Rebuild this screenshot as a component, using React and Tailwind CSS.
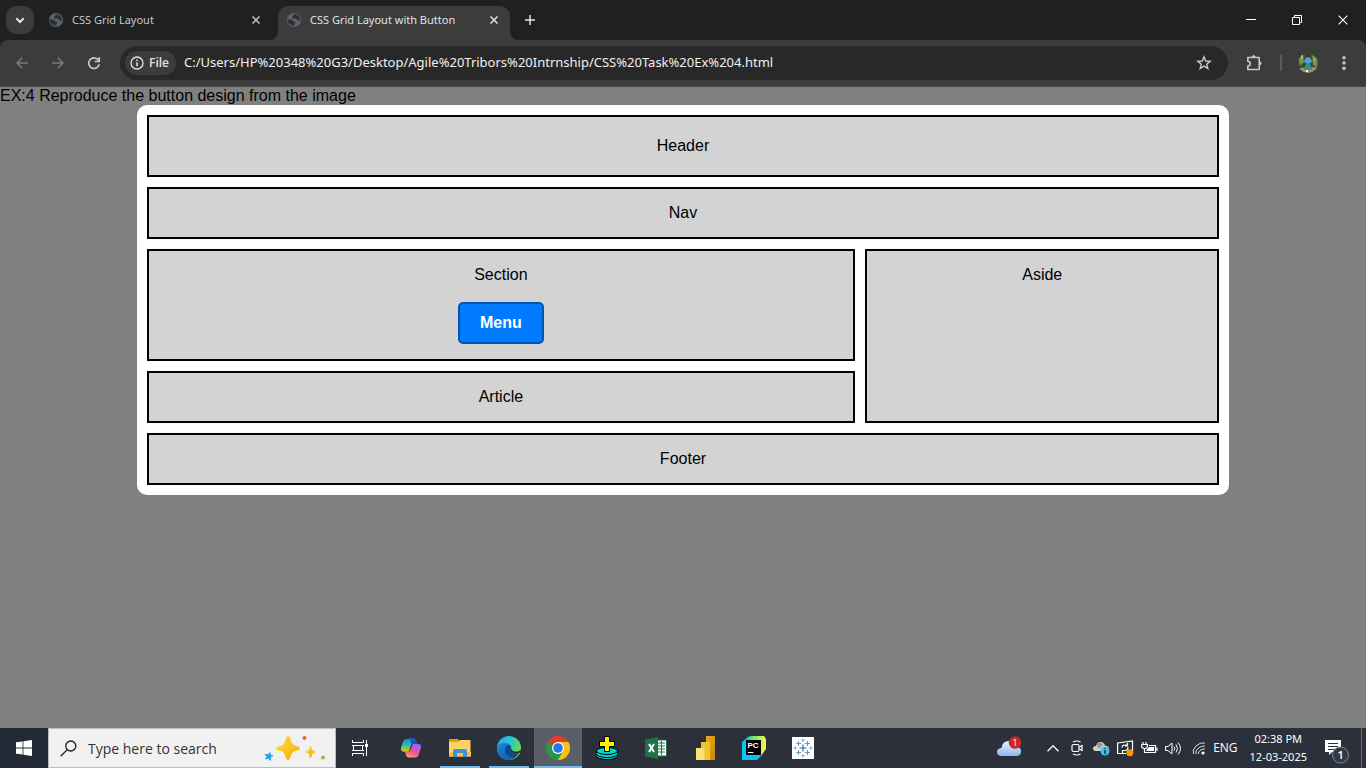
import React from "react";

const UI = "font-['Open_Sans','Noto_Sans',sans-serif]";

function Globe() {
  return (
    <svg width="16" height="16" viewBox="0 0 16 16" className="shrink-0" aria-hidden="true">
      <circle cx="8" cy="8" r="7" fill="#5f6368" />
      <path d="M1.600 7.500H4.600Q7.300 7.600 7.300 9.600H8.600Q9.600 9.800 9.600 11L8.400 11.400V13.800Q5 14 3 11.800Q1.600 10 1.600 7.500Z" fill="#2d3033" />
      <path d="M7.400 2.200H9.800Q12.600 3.200 13.800 5.800L13.900 8.400Q12 9.300 11.400 7.900L9.600 6.600H7.600Q5.800 6.400 6 4.900Q6.200 4 7.400 4Z" fill="#2d3033" />
    </svg>
  );
}

function Cross({ size = 8, stroke = 1.5 }) {
  return (
    <svg width={size} height={size} viewBox="0 0 8 8" fill="none" stroke="currentColor" strokeWidth={stroke} aria-hidden="true">
      <path d="M.5 .5 7.5 7.5M7.5 .5 .5 7.5" />
    </svg>
  );
}

function TabBar() {
  return (
    <div className="flex h-10 items-center bg-[#1f2120] text-[#e3e3e3]">
      <button aria-label="Search tabs" className="ml-1.5 flex size-7 items-center justify-center rounded-[10px] bg-[#3c3c3c]">
        <svg width="10" height="7" viewBox="0 0 10 7" fill="none" stroke="currentColor" strokeWidth="2"><path d="M1.3 1.3 5 5 8.700 1.3" /></svg>
      </button>
      <div className="ml-3.5 flex w-[230px] items-center gap-2 pr-[18px] text-[#c7c7c7]">
        <Globe />
        <span className="flex-1 font-['Noto_Sans',sans-serif] text-[11px] leading-4">CSS Grid Layout</span>
        <button aria-label="Close CSS Grid Layout" className="flex"><Cross /></button>
      </div>
      <div className="relative flex h-[34px] w-[232px] items-center gap-2 self-end rounded-t-[10px] bg-[#3c3c3c] pr-3 pb-1.5 pl-2">
        <svg className="absolute -left-2 bottom-0" width="8" height="8" viewBox="0 0 8 8"><path d="M8 0V8H0A8 8 0 0 0 8 0Z" fill="#3c3c3c" /></svg>
        <svg className="absolute -right-2 bottom-0" width="8" height="8" viewBox="0 0 8 8"><path d="M0 0V8H8A8 8 0 0 1 0 0Z" fill="#3c3c3c" /></svg>
        <Globe />
        <span className="flex-1 font-['Noto_Sans',sans-serif] text-[11px] leading-4 whitespace-nowrap">CSS Grid Layout with Button</span>
        <button aria-label="Close CSS Grid Layout with Button" className="flex"><Cross /></button>
      </div>
      <button aria-label="New tab" className="ml-1.5 flex size-7 items-center justify-center">
        <svg width="12" height="12" viewBox="0 0 12 12" stroke="currentColor" strokeWidth="1.500"><path d="M6 1V11M1 6H11" /></svg>
      </button>
      <div className="ml-auto flex h-full text-white">
        <button aria-label="Minimize" className="flex w-[46px] items-center justify-center">
          <svg width="10" height="10" viewBox="0 0 10 10"><path d="M0 4H10V5H0Z" fill="currentColor" /></svg>
        </button>
        <button aria-label="Restore" className="flex w-[46px] items-center justify-center">
          <svg width="10" height="10" viewBox="0 0 10 10" fill="none" stroke="currentColor"><path d="M.5 2.500H7.500V9.500H.5ZM2.500 2.500V.5H9.500V7.500H7.500" /></svg>
        </button>
        <button aria-label="Close window" className="flex w-[46px] items-center justify-center">
          <Cross size={10} stroke={0.9} />
        </button>
      </div>
    </div>
  );
}

function Toolbar() {
  return (
    <div className="bg-[#1f2120]">
      <div className="flex h-[47px] items-center rounded-t-lg border-b border-[#4a4a4a] bg-[#3c3c3c] pr-2 pl-2 text-[#c7c7c7]">
        <div className="flex gap-2">
          <button aria-label="Back" className="flex size-7 items-center justify-center text-[#7b7b7b]">
            <svg width="12" height="12" viewBox="0 0 12 12" fill="none" stroke="currentColor" strokeWidth="1.500"><path d="M12 6H1.200M6.300 .8 1.100 6 6.300 11.200" /></svg>
          </button>
          <button aria-label="Forward" className="flex size-7 items-center justify-center text-[#7b7b7b]">
            <svg width="12" height="12" viewBox="0 0 12 12" fill="none" stroke="currentColor" strokeWidth="1.500"><path d="M0 6H10.800M5.700 .8 10.900 6 5.700 11.200" /></svg>
          </button>
          <button aria-label="Reload" className="flex size-7 items-center justify-center">
            <svg width="14" height="14" viewBox="0 0 14 14" fill="none" stroke="currentColor" strokeWidth="1.700"><path d="M12.200 8.300A5.300 5.300 0 1 1 11.300 4L12.300 5.200M12.200 1V5.500H7.700" /></svg>
          </button>
        </div>
        <div className="ml-3 flex h-[34px] flex-1 items-center rounded-full bg-[#282828] pr-4 pl-[5px]">
          <button className="flex h-6 items-center gap-[5px] rounded-full bg-[#3c3c3c] pr-[7px] pl-[5px] text-[12px] font-semibold text-[#e3e3e3]">
            <svg width="14" height="14" viewBox="0 0 14 14" fill="none" stroke="currentColor" strokeWidth="1.300"><circle cx="7" cy="7" r="6" /><path d="M7 6.200V10.300M7 3.500V5" strokeWidth="1.500" /></svg>
            File
          </button>
          <input
            aria-label="Address"
            className="ml-2 min-w-0 flex-1 bg-transparent font-['Noto_Sans',sans-serif] text-[13px] text-[#f0f0f0] outline-none"
            defaultValue="C:/Users/HP%20348%20G3/Desktop/Agile%20Tribors%20Intrnship/CSS%20Task%20Ex%204.html"
          />
          <button aria-label="Bookmark this page">
            <svg width="16" height="16" viewBox="0 0 16 16" fill="none" stroke="currentColor" strokeWidth="1.400"><path d="M8 1.800 9.700 6 14.200 6.300 10.700 9.200 11.800 13.600 8 11.200 4.200 13.600 5.300 9.200 1.800 6.300 6.300 6Z" /></svg>
          </button>
        </div>
        <button aria-label="Extensions" className="ml-[17px]">
          <svg width="18" height="18" viewBox="0 0 18 18" fill="none" stroke="currentColor" strokeWidth="1.600"><path d="M2.800 3.500H14.200V15.500H2.800V12A2.300 2.300 0 0 0 2.800 7.200Z" strokeLinejoin="round" /><path d="M7 3.500A1.700 1.900 0 0 1 10.400 3.500M14.200 7.600A1.900 1.800 0 0 1 14.200 11.200" fill="currentColor" strokeWidth="1" /></svg>
        </button>
        <span className="ml-[17px] h-4 w-0.5 bg-[#5a5a5a]" />
        <button aria-label="Profile" className="ml-4">
          <svg width="20" height="20" viewBox="0 0 20 20">
            <defs><clipPath id="avatar"><circle cx="10" cy="10" r="10" /></clipPath></defs>
            <g clipPath="url(#avatar)">
              <path d="M0 0H20V20H0Z" fill="#31502b" />
              <path d="M0 4 5 1 6 9 2 13ZM14 2 20 6 19 14 15 12Z" fill="#77904b" />
              <path d="M3 2h2v4H3ZM16 5h1v4h-1Z" fill="#a9b97d" />
              <path d="M0 15 20 14V20H0Z" fill="#a68b7d" />
              <path d="M8 4.500H12L14.500 9 12 9.500 12 11H8L7.500 9.500 5.500 9Z" fill="#4aa2e4" />
              <path d="M8 10H12L14 17H6Z" fill="#3b8c87" />
              <circle cx="10" cy="3" r="1.500" fill="#3b2824" />
              <path d="M9.300 4H10.700V6H9.300Z" fill="#b07a63" />
              <path d="M8 17h2v2H8Z" fill="#fff" />
            </g>
          </svg>
        </button>
        <button aria-label="Menu for the browser" className="ml-3 flex size-7 items-center justify-center">
          <svg width="4" height="14" viewBox="0 0 4 14" fill="currentColor"><circle cx="2" cy="1.800" r="1.700" /><circle cx="2" cy="7" r="1.700" /><circle cx="2" cy="12.200" r="1.700" /></svg>
        </button>
      </div>
    </div>
  );
}

function Page() {
  const box = "border-2 border-black bg-[#d3d3d3] p-[15px]";
  return (
    <main className="flex-1 bg-[#808080] font-['Liberation_Sans',sans-serif] text-[16px] leading-[18px] text-black">
      <p>EX:4 Reproduce the button design from the image</p>
      <div className="mx-auto grid w-4/5 grid-cols-[2fr_1fr] gap-2.5 rounded-[10px] bg-white p-2.5 text-center">
        <header className="col-span-2 border-2 border-black bg-[#d3d3d3] p-5">Header</header>
        <nav className={`col-span-2 ${box}`}>Nav</nav>
        <section className={box}>
          <p>Section</p>
          <button className="mx-auto mt-[18px] block rounded-[5px] border-2 border-[#0056b3] bg-[#007bff] px-5 py-2.5 font-bold text-white">Menu</button>
        </section>
        <aside className={`row-span-2 ${box}`}>Aside</aside>
        <article className={box}>Article</article>
        <footer className={`col-span-2 ${box}`}>Footer</footer>
      </div>
    </main>
  );
}

function TaskButton({ label, running, active, children }) {
  return (
    <button
      aria-label={label}
      className={`flex w-12 flex-col items-center ${active ? "bg-[#5a5f66]" : ""}`}
    >
      <span className="flex flex-1 items-center pt-0.5">{children}</span>
      <span className={`h-0.5 ${active ? "w-12 bg-[#76b9ed]" : running ? "w-10 bg-[#76b9ed]" : "w-10"}`} />
    </button>
  );
}

function Sparkles() {
  return (
    <svg width="64" height="28" viewBox="0 0 64 28" className="shrink-0" aria-hidden="true">
      <defs>
        <linearGradient id="star" x1="0" y1="0" x2="1" y2="1"><stop offset="0" stopColor="#ffdf45" /><stop offset="1" stopColor="#f4a900" /></linearGradient>
      </defs>
      <path d="M25 2Q27 2 28 7 29 11 33 12 37 13 37 14.500 37 16 32 17 29 18 28 21 27 26 25 26 23 26 22 21 21 18 18 17 13 16 13 14 13 13 18 12 21 11 22 7 23 2 25 2Z" fill="url(#star)" />
      <path d="M47.500 12Q48.500 12 49 15 49.500 16.500 52 17.500 53 18 52 18.600 49.500 19 49 21 48.500 24 47.500 24 46.500 24 46 21 45.500 19 43 18.600 41.500 18 43 17.500 45.500 16.500 46 15 46.500 12 47.500 12Z" fill="url(#star)" />
      <path d="M7 18.500 7 21.200 10 21.500 7.500 23.200 7.500 26.500 5.500 24 2.500 25 4 22.500 2 20.500 5 20.800Z" fill="#20a7e8" stroke="#20a7e8" strokeLinejoin="round" />
      <circle cx="41.500" cy="4" r="2" fill="#ed6230" />
      <circle cx="60" cy="23.500" r="2" fill="#87c540" />
    </svg>
  );
}

function Taskbar() {
  return (
    <footer className={`flex h-10 bg-[#2b303a] text-white ${UI}`}>
      <button aria-label="Start" className="flex w-12 items-center justify-center bg-[#232a36]">
        <svg width="16" height="16" viewBox="0 0 16 16" fill="white"><path d="M0 2.300 6.600 1.400V7.600H0ZM7.400 1.300 16 0V7.600H7.400ZM0 8.400H6.600V14.600L0 13.700ZM7.400 8.400H16V16L7.400 14.700Z" /></svg>
      </button>
      <label className="flex w-72 items-center border border-[#bdbdbd] bg-[#f1f1f1] pr-2 pl-[11px] text-[#2d2d2d]">
        <svg width="17" height="17" viewBox="0 0 17 17" fill="none" stroke="#1b1b1b" strokeWidth="1.300" className="shrink-0"><circle cx="10.800" cy="6" r="5" /><path d="M7.200 9.600 .7 16.300" /></svg>
        <input aria-label="Search" placeholder="Type here to search" className="ml-[11px] w-0 min-w-0 flex-1 bg-transparent text-[14px] outline-none placeholder:text-[#333]" />
        <Sparkles />
      </label>
      <div className="flex gap-px">
        <TaskButton label="Task view">
          <svg width="17" height="16" viewBox="0 0 17 16" fill="none" stroke="white"><path d="M.5 0V2.500H11.500V0M.5 16V13.500H11.500V16M1.500 5.500H10.500V10.500H1.500ZM0 5.500H12M0 10.500H12M14.500 0V4M14.500 7V16" /><path d="M13 4H16V7H13Z" fill="white" stroke="none" /></svg>
        </TaskButton>
        <span className="w-px" />
        <TaskButton label="Copilot">
          <svg width="22" height="20" viewBox="0 0 24 22">
            <defs>
              <linearGradient id="cpa" x1="0" y1="0" x2="0" y2="1"><stop offset="0" stopColor="#168bdc" /><stop offset=".5" stopColor="#35bda4" /><stop offset="1" stopColor="#f0c400" /></linearGradient>
              <linearGradient id="cpb" x1=".4" y1="0" x2="0" y2="1"><stop offset="0" stopColor="#a660eb" /><stop offset=".5" stopColor="#ef558c" /><stop offset="1" stopColor="#ffb052" /></linearGradient>
            </defs>
            <path d="M7 1H15Q17.500 1 18 4L18.500 6H15Q12.500 6 12 8L9.500 15H4Q0 15 1.200 10L3.500 3.500Q4.500 1 7 1Z" fill="url(#cpa)" />
            <path d="M14.500 0Q17 0 17.800 4L18.400 7H15Q13.500 7 12.700 8L11.500 3Q11 0 8 0Z" fill="#1455c4" />
            <path d="M17 21.500H9Q6.500 21 6 18L5.500 15H8.500Q11 15 11.500 13L14 6.500H20Q24 6.500 22.800 11L20.500 18.500Q19.500 21.500 17 21.500Z" fill="url(#cpb)" />
          </svg>
        </TaskButton>
        <TaskButton label="File Explorer" running>
          <svg width="22" height="20" viewBox="0 0 22 20"><path d="M0 1H9L10 3V6H0Z" fill="#e8a000" /><path d="M0 4H9L11 2H21.500V18.500H0Z" fill="#ffd266" /><path d="M0 14H22V18.500H0Z" fill="#f6bd4c" /><path d="M4 19V13Q4 11 6 11H16Q18 11 18 13V19H14V15H8V19Z" fill="#3f92d3" /></svg>
        </TaskButton>
        <TaskButton label="Microsoft Edge" running>
          <svg width="24" height="24" viewBox="0 0 24 24">
            <defs>
              <linearGradient id="ea" x1="0" y1="0" x2="1" y2=".5"><stop offset="0" stopColor="#2aa5e8" /><stop offset=".5" stopColor="#28c4d4" /><stop offset="1" stopColor="#6edb4c" /></linearGradient>
              <linearGradient id="eb" x1="0" y1="0" x2="1" y2="1"><stop offset="0" stopColor="#168de0" /><stop offset="1" stopColor="#1250a5" /></linearGradient>
            </defs>
            <circle cx="12" cy="12" r="12" fill="url(#ea)" />
            <path d="M0 12Q1 7 7.500 7C12.500 7 14.500 9.500 14 12.500C13 14 13 15 15 16.500C18 18 20 17.500 22 16.300Q19 23.500 12 24C5 24 0 19 0 12Z" fill="url(#eb)" />
            <path d="M8 14Q8 9.500 12 9Q14.700 10 14 12.500C13 14 13 15 15 16.500C18 18 20 17.500 22 16.300Q21 20 17.500 21.500C12 22 8 18.500 8 14Z" fill="#114a8b" />
            <path d="M14 12.500C13 14 13 15 15 16.500C18.500 18.200 22.500 17 24 16V14Q21 16 17.500 15.500C15 15 15 13.500 14 12.500Z" fill="#2b303a" />
          </svg>
        </TaskButton>
        <TaskButton label="Google Chrome" active>
          <svg width="24" height="24" viewBox="0 0 24 24">
            <path d="M12 12 1.600 6A12 12 0 0 1 22.400 6Z" fill="#e33b2e" />
            <path d="M12 12 22.400 6A12 12 0 0 1 12 24Z" fill="#fbc116" />
            <path d="M12 12 12 24A12 12 0 0 1 1.600 6Z" fill="#279847" />
            <path d="M12 6H22.400L17.200 15 12 24 17 13Z" fill="#fbc116" />
            <path d="M1.600 6 7 15 12 18 16.900 15.500 12 24Q5 23 2 18Z" fill="#279847" />
            <circle cx="12" cy="12" r="6" fill="white" /><circle cx="12" cy="12" r="4.800" fill="#2775e8" />
          </svg>
        </TaskButton>
        <TaskButton label="Database tools">
          <svg width="24" height="24" viewBox="0 0 24 24" stroke="black"><ellipse cx="12" cy="19.500" rx="11" ry="4" fill="#00d8dd" /><ellipse cx="12" cy="17.500" rx="11" ry="4" fill="#00d8dd" /><ellipse cx="12" cy="15" rx="10.500" ry="3.500" fill="#00d8dd" /><path d="M9.500 .5H14.500V5.500H19.500V10.500H14.500V15.500H9.500V10.500H4.500V5.500H9.500Z" fill="#fff200" /></svg>
        </TaskButton>
        <TaskButton label="Excel">
          <svg width="22" height="22" viewBox="0 0 22 22"><path d="M12 3H21.500V19H12Z" fill="#fff" stroke="#1f7245" /><path d="M13 6H20M13 9H20M13 12H20M13 15H20M16.500 4V18" stroke="#1f7245" strokeWidth="1" /><path d="M0 2.500 13 0V22L0 19.500Z" fill="#1f7245" /><path d="M4 7 9 15M9 7 4 15" stroke="white" strokeWidth="2" /></svg>
        </TaskButton>
        <TaskButton label="Power BI">
          <svg width="19" height="24" viewBox="0 0 19 24">
            <defs><linearGradient id="pb" x1="0" y1="0" x2="1" y2="1"><stop offset="0" stopColor="#e8ae18" /><stop offset="1" stopColor="#c98706" /></linearGradient></defs>
            <path d="M10 0H19V24H10Z" fill="url(#pb)" /><path d="M5 6H14V24H5Z" fill="#efc42d" /><path d="M0 12H8.500V24H0Z" fill="#fbe277" />
          </svg>
        </TaskButton>
        <TaskButton label="PyCharm">
          <svg width="24" height="24" viewBox="0 0 24 24">
            <defs><linearGradient id="pc" x1="0" y1="0" x2="1" y2="0"><stop offset="0" stopColor="#21d789" /><stop offset="1" stopColor="#fcf84a" /></linearGradient></defs>
            <path d="M0 6 7 0 14 4 19 20 15 24H0Z" fill="#07c3f2" /><path d="M9 0H22L24 3V13L19 20V5H4Z" fill="url(#pc)" /><path d="M4 4H19V19H4Z" fill="#000" />
            <text x="5.500" y="12" fill="white" fontSize="8" fontWeight="700" fontFamily="Liberation Sans">PC</text><path d="M6 16H11.500V17H6Z" fill="white" />
          </svg>
        </TaskButton>
        <TaskButton label="Tableau">
          <svg width="22" height="22" viewBox="0 0 22 22" fill="none"><path d="M0 0H22V22H0Z" fill="white" /><path d="M11 7.500V14.500M7.500 11H14.500" stroke="#286ca6" strokeWidth="1.200" /><path d="M6.500 4V9M4 6.500H9M15.500 4V9M13 6.500H18M6.500 13V18M4 15.500H9M15.500 13V18M13 15.500H18" stroke="#6399bf" strokeWidth="1.100" /><path d="M11 1.500V5M9.300 3.200H12.700M11 17V20.500M9.300 18.800H12.700M1.500 11H5M3.200 9.300V12.700M17 11H20.500M18.800 9.300V12.700" stroke="#82acc9" strokeWidth="1" /></svg>
        </TaskButton>
      </div>
      <div className="ml-auto flex items-center">
        <button aria-label="Weather, 1 alert" className="mr-[19px]">
          <svg width="26" height="24" viewBox="0 0 26 24">
            <defs><linearGradient id="cl" x1="0" y1="0" x2="0" y2="1"><stop offset="0" stopColor="#edf5ff" /><stop offset="1" stopColor="#8db5f0" /></linearGradient></defs>
            <path d="M6 20Q1 20 1 16 1 12.500 5.500 12 6.500 5 12.500 5 18 5 19.500 10.500 25 11 25 15.500 25 20 19.500 20Z" fill="url(#cl)" />
            <circle cx="19" cy="6.500" r="6.300" fill="#c92a25" /><text x="16.500" y="10" fill="white" fontSize="9" fontFamily="Open Sans">1</text>
          </svg>
        </button>
        <button aria-label="Show hidden icons" className="flex w-6 justify-center"><svg width="12" height="7" viewBox="0 0 12 7" fill="none" stroke="white" strokeWidth="1.300"><path d="M.5 6.300 6 .8 11.500 6.300" /></svg></button>
        <button aria-label="Meet now" className="flex w-6 justify-center"><svg width="12" height="16" viewBox="0 0 12 16" fill="none" stroke="white" strokeWidth="1.200"><rect x="1" y="4.500" width="7" height="7" rx="1.500" /><path d="M8.500 7 11 5.500V10.500L8.500 9M2 2Q6 0 9.500 2M2 14Q6 16 9.500 14" /></svg></button>
        <button aria-label="OneDrive" className="flex w-6 justify-center"><svg width="17" height="16" viewBox="0 0 17 16"><path d="M3 11Q0 11 0 8.500 0 6 3 6 4 2 7.500 2 11 2 12 5.500 16 6 16 9 16 11 13 11Z" fill="#d0d0d0" /><path d="M4 4Q8 1 10 5L5 9Z" fill="#969696" /><circle cx="12" cy="11" r="4.500" fill="#48bdf0" /><path d="M12 10V14M12 8V9" stroke="#07345c" strokeWidth="1.500" /></svg></button>
        <button aria-label="Updates" className="flex w-6 justify-center"><svg width="17" height="17" viewBox="0 0 17 17" fill="none" stroke="white" strokeWidth="1.200"><path d="M.6 3 15.500 1V12M.6 2.500V13.500H9M5 7.500Q5 5 8 5H10M10.500 3V6H8M11 7Q11 10.500 8 10.500H6M5.500 13V10.500H8" /><circle cx="12.800" cy="12.800" r="3.500" fill="#ff9800" stroke="none" /></svg></button>
        <button aria-label="Battery charging" className="flex w-6 justify-center"><svg width="17" height="13" viewBox="0 0 17 13" fill="none" stroke="white" strokeWidth="1.200"><path d="M2 0V2M5 0V2M.6 2.500H6.400V4.500Q6.400 6 4.500 6.500H3Q.6 6 .6 4V2.500M3.500 6.500V10.500H14.500V3.500H8M16 5.500V9" /><path d="M8 5H13V9H5.500V8Z" fill="white" stroke="none" /></svg></button>
        <button aria-label="Volume" className="flex w-6 justify-center"><svg width="17" height="15" viewBox="0 0 17 15" fill="none" stroke="white"><path d="M.5 5.500H3L7 2V13L3 9.500H.5ZM9 5.500Q10.500 7.500 9 9.500M11 3.500Q14 7.500 11 11.500M13 1.500Q18 7.500 13 13.500" /></svg></button>
        <button aria-label="Wi-Fi" className="flex w-7 justify-center"><svg width="14" height="14" viewBox="0 0 14 14" fill="none" stroke="#ddd"><path d="M1.500 13Q0 9 4 5 8 1 13 2M4 13Q3 10 6 7.500 9 4.500 13 5M6.500 13Q6 11 8 9.500 10 7.500 13 8" /><circle cx="11" cy="12" r="1.600" fill="white" stroke="none" /></svg></button>
        <button className="text-[12px] leading-[18px]">ENG</button>
        <button className="ml-3 text-center font-['Noto_Sans',sans-serif] text-[11px] leading-[18px]"><span className="block">02:38 PM</span><span className="block">12-03-2025</span></button>
        <button aria-label="Notifications, 1 new" className="ml-4 pt-2">
          <svg width="28" height="26" viewBox="0 0 28 26"><path d="M2 1H18V13H9L6 16V13H2Z" fill="white" /><path d="M5 4.500H15M5 7.500H15M5 10.500H12" stroke="#2b303a" /><circle cx="17.500" cy="16" r="8" fill="#333942" stroke="#858a90" /><text x="14.500" y="20" fill="white" fontSize="11" fontFamily="Open Sans" fontWeight="600">1</text></svg>
        </button>
        <button aria-label="Show desktop" className="ml-2.5 h-10 w-[5px] border-l border-[#6a6e75]" />
      </div>
    </footer>
  );
}

export default function App() {
  return (
    <div className="flex min-h-screen flex-col">
      <div className={UI}>
        <TabBar />
        <Toolbar />
      </div>
      <Page />
      <Taskbar />
    </div>
  );
}
